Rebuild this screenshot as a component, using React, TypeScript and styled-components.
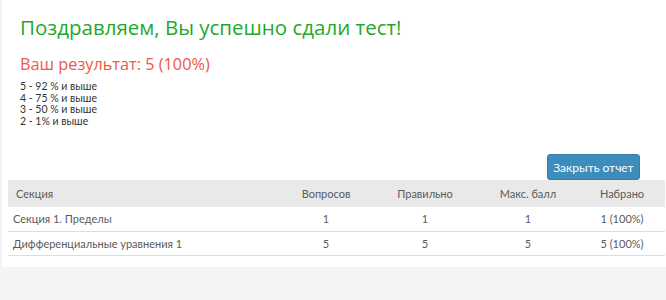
import React from 'react';
import styled, { createGlobalStyle } from 'styled-components';

const GlobalStyle = createGlobalStyle`
  html, body {
    margin: 0;
    padding: 0;
    background: #f4f4f4;
    overflow: hidden;
  }
  * {
    box-sizing: border-box;
  }
`;

const Page = styled.div`
  width: 666px;
  height: 300px;
  padding-left: 2px;
`;

const Panel = styled.div`
  background: #fff;
  height: 267px;
  padding-top: 12px;
`;

const Intro = styled.div`
  padding: 0 18px;
`;

const Title = styled.h1`
  margin: 0;
  font-family: 'Open Sans', sans-serif;
  font-weight: 400;
  font-size: 20.5px;
  line-height: 30px;
  color: #1fa82a;
`;

const Result = styled.h3`
  margin: 11px 0 0;
  font-family: 'Open Sans', sans-serif;
  font-weight: 400;
  font-size: 16.3px;
  line-height: 22px;
  color: #ec5a45;
`;

const Scale = styled.div`
  margin-top: 6px;
  font-family: 'Lato', sans-serif;
  font-size: 10.5px;
  line-height: 11.5px;
  color: #333;
`;

const Actions = styled.div`
  display: flex;
  justify-content: flex-end;
  padding: 0 26px 0 0;
  margin-top: 27px;
`;

const Button = styled.button`
  height: 26px;
  width: 93px;
  padding: 0;
  border: 1px solid #367fa9;
  border-radius: 3px;
  background: #3c8dbc;
  color: #fff;
  font-family: 'Lato', sans-serif;
  font-size: 12px;
`;

const TableWrap = styled.div`
  padding: 0 1px 0 6px;
`;

const Table = styled.table`
  width: 100%;
  border-collapse: collapse;
  font-family: 'Lato', sans-serif;
  font-size: 11px;
  color: #5a5a5a;
`;

const HeadCell = styled.th<{ $w?: number; $left?: boolean }>`
  background: #e9e9e9;
  height: 27px;
  padding: 0 8px;
  font-weight: 400;
  text-align: ${({ $left }) => ($left ? 'left' : 'center')};
  width: ${({ $w }) => ($w ? `${$w}px` : 'auto')};
`;

const Row = styled.tr`
  border-bottom: 1px solid #d7dfe2;
`;

const Cell = styled.td<{ $left?: boolean }>`
  height: 24px;
  padding: 0 5px;
  text-align: ${({ $left }) => ($left ? 'left' : 'center')};
`;

const rows = [
  { name: 'Секция 1. Пределы', q: 1, ok: 1, max: 1, got: '1 (100%)' },
  { name: 'Дифференциальные уравнения 1', q: 5, ok: 5, max: 5, got: '5 (100%)' },
];

export default function App() {
  return (
    <Page>
      <GlobalStyle />
      <Panel>
        <Intro>
          <Title>Поздравляем, Вы успешно сдали тест!</Title>
          <Result>Ваш результат: 5 (100%)</Result>
          <Scale>
            <div>5 - 92 % и выше</div>
            <div>4 - 75 % и выше</div>
            <div>3 - 50 % и выше</div>
            <div>2 - 1% и выше</div>
          </Scale>
        </Intro>
        <Actions>
          <Button>Закрыть отчет</Button>
        </Actions>
        <TableWrap>
          <Table>
            <thead>
              <tr>
                <HeadCell $left>Секция</HeadCell>
                <HeadCell $w={94}>Вопросов</HeadCell>
                <HeadCell $w={104}>Правильно</HeadCell>
                <HeadCell $w={102}>Макс. балл</HeadCell>
                <HeadCell $w={86}>Набрано</HeadCell>
              </tr>
            </thead>
            <tbody>
              {rows.map((r) => (
                <Row key={r.name}>
                  <Cell $left>{r.name}</Cell>
                  <Cell>{r.q}</Cell>
                  <Cell>{r.ok}</Cell>
                  <Cell>{r.max}</Cell>
                  <Cell>{r.got}</Cell>
                </Row>
              ))}
            </tbody>
          </Table>
        </TableWrap>
      </Panel>
    </Page>
  );
}
